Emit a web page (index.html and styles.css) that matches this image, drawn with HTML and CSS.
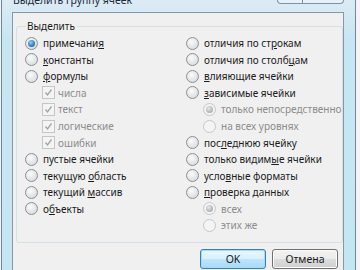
FILE: index.html
```html
<!DOCTYPE html>
<html lang="ru">
<head>
  <meta charset="UTF-8" />
  <title>Выделить группу ячеек</title>
  <link rel="stylesheet" href="styles.css">
</head>
<body>
  <div class="window">
    <div class="titlebar">
      <span class="title">Выделить группу ячеек</span>
      <div class="caption-btns">
        <span class="cap help"></span>
        <span class="cap close"></span>
      </div>
    </div>

    <div class="client">
      <fieldset class="group">
        <legend>Выделить</legend>
        <div class="cols">
          <div class="col">
            <div class="row"><span class="radio on"></span><span>примечани<u>я</u></span></div>
            <div class="row"><span class="radio"></span><span><u>к</u>онстанты</span></div>
            <div class="row"><span class="radio"></span><span><u>ф</u>ормулы</span></div>
            <div class="row sub off"><span class="check"></span><span>числа</span></div>
            <div class="row sub off"><span class="check"></span><span>текст</span></div>
            <div class="row sub off"><span class="check"></span><span>логические</span></div>
            <div class="row sub off"><span class="check"></span><span>ошибки</span></div>
            <div class="row"><span class="radio"></span><span>пустые ячейки</span></div>
            <div class="row"><span class="radio"></span><span>текущую <u>о</u>бласть</span></div>
            <div class="row"><span class="radio"></span><span>текущий <u>м</u>ассив</span></div>
            <div class="row"><span class="radio"></span><span>о<u>б</u>ъекты</span></div>
          </div>
          <div class="col">
            <div class="row"><span class="radio"></span><span>отличия по ст<u>р</u>окам</span></div>
            <div class="row"><span class="radio"></span><span>отличия по столб<u>ц</u>ам</span></div>
            <div class="row"><span class="radio"></span><span><u>в</u>лияющие ячейки</span></div>
            <div class="row"><span class="radio"></span><span><u>з</u>ависимые ячейки</span></div>
            <div class="row sub off"><span class="radio on"></span><span>только непосредственно</span></div>
            <div class="row sub off"><span class="radio"></span><span>на всех уровнях</span></div>
            <div class="row"><span class="radio"></span><span>пос<u>л</u>еднюю ячейку</span></div>
            <div class="row"><span class="radio"></span><span>только видим<u>ы</u>е ячейки</span></div>
            <div class="row"><span class="radio"></span><span>усло<u>в</u>ные форматы</span></div>
            <div class="row"><span class="radio"></span><span><u>п</u>роверка данных</span></div>
            <div class="row sub off"><span class="radio on"></span><span>всех</span></div>
            <div class="row sub off"><span class="radio"></span><span>этих же</span></div>
          </div>
        </div>
      </fieldset>

      <div class="buttons">
        <button class="btn default">OK</button>
        <button class="btn">Отмена</button>
      </div>
    </div>
  </div>
</body>
</html>
```

FILE: styles.css
```css
html, body {
  margin: 0;
  height: 270px;
  overflow: hidden;
}
body {
  background: #f6f3f5;
  font-family: "Noto Sans", "DejaVu Sans", sans-serif;
  font-size: 10px;
  color: #1b1b1b;
}
.window {
  margin-left: 1px;
  width: 332px;
  height: 300px;
  padding: 0 11px 0 10px;
  border: 1px solid #71869a;
  border-top: none;
  background: linear-gradient(#dcebf5, #c6e6f2 40px, #c4e6f2);
}
.titlebar {
  height: 12px;
  display: flex;
  justify-content: space-between;
  overflow: hidden;
}
.title {
  margin: -7px 0 0 1px;
  font-size: 10.5px;
  line-height: 14px;
  color: #1e2a36;
}
.caption-btns {
  display: flex;
  height: 4px;
}
.cap {
  height: 3px;
  border: 1px solid #7d91a6;
  border-top: none;
  background: #e6f1f8;
}
.help {
  width: 24px;
  border-radius: 0 0 0 4px;
}
.close {
  width: 40px;
  border-left: none;
  border-radius: 0 0 4px 0;
}
.client {
  height: 300px;
  padding-top: 6px;
  background: #f0f0f0;
  border: 1px solid #8698a8;
}
.group {
  margin: 0 2px 0 3px;
  padding: 1px 0 8px 8px;
  border: 1px solid #d5dfe5;
  border-radius: 3px;
}
.group legend {
  margin-left: 1px;
  padding: 0 2px 0 1px;
  line-height: 15px;
}
.cols {
  display: grid;
  grid-template-columns: 161px 1fr;
}
.row {
  height: 16.55px;
  display: flex;
  align-items: center;
  white-space: nowrap;
}
.row.sub {
  padding-left: 17px;
}
.row.off {
  color: #8d8d8d;
}
u {
  text-decoration-thickness: 1px;
  text-underline-offset: 1px;
}
.radio {
  position: relative;
  flex: none;
  width: 11px;
  height: 11px;
  margin-right: 5px;
  border: 1px solid #8c8f94;
  border-radius: 50%;
  background: radial-gradient(circle at 40% 35%, #fbfbfb, #d9dbde 80%);
}
.radio.on::after {
  content: "";
  position: absolute;
  left: 2px;
  top: 2px;
  width: 7px;
  height: 7px;
  border-radius: 50%;
  background: radial-gradient(circle at 40% 35%, #8fd0f7, #1f6fba 70%, #1b4f8a);
}
.off .radio {
  border-color: #c4c6c8;
  background: #f4f4f4;
}
.off .radio.on::after {
  background: radial-gradient(circle at 40% 35%, #e8e8e8, #a9abad 75%);
}
.check {
  flex: none;
  width: 11px;
  height: 11px;
  margin-right: 3px;
  border: 1px solid #c4c6c8;
  background: #f4f4f4 url("data:image/svg+xml,%3Csvg xmlns='http://www.w3.org/2000/svg' width='11' height='11'%3E%3Cpath d='M2.5 5.5 L4.5 8 L8.5 2.5' fill='none' stroke='%23a2a4a6' stroke-width='1.3'/%3E%3C/svg%3E") no-repeat;
}
.buttons {
  display: flex;
  justify-content: flex-end;
  gap: 6px;
  margin-top: 6px;
  padding-right: 5px;
}
.btn {
  width: 66px;
  height: 20px;
  padding: 0;
  font-family: inherit;
  font-size: 10.5px;
  color: #1b1b1b;
  border: 1px solid #707070;
  border-radius: 3px;
  background: linear-gradient(#f2f2f2, #ebebeb 50%, #dddddd 50%, #cfcfcf);
  box-shadow: inset 0 0 0 1px #fcfcfc;
}
.btn.default {
  border-color: #3c7fb1;
  background: linear-gradient(#eaf6fd, #d9f0fc 50%, #bee6fd 50%, #a7d9f5);
  box-shadow: inset 0 0 0 1px #9edcf8;
}
```
